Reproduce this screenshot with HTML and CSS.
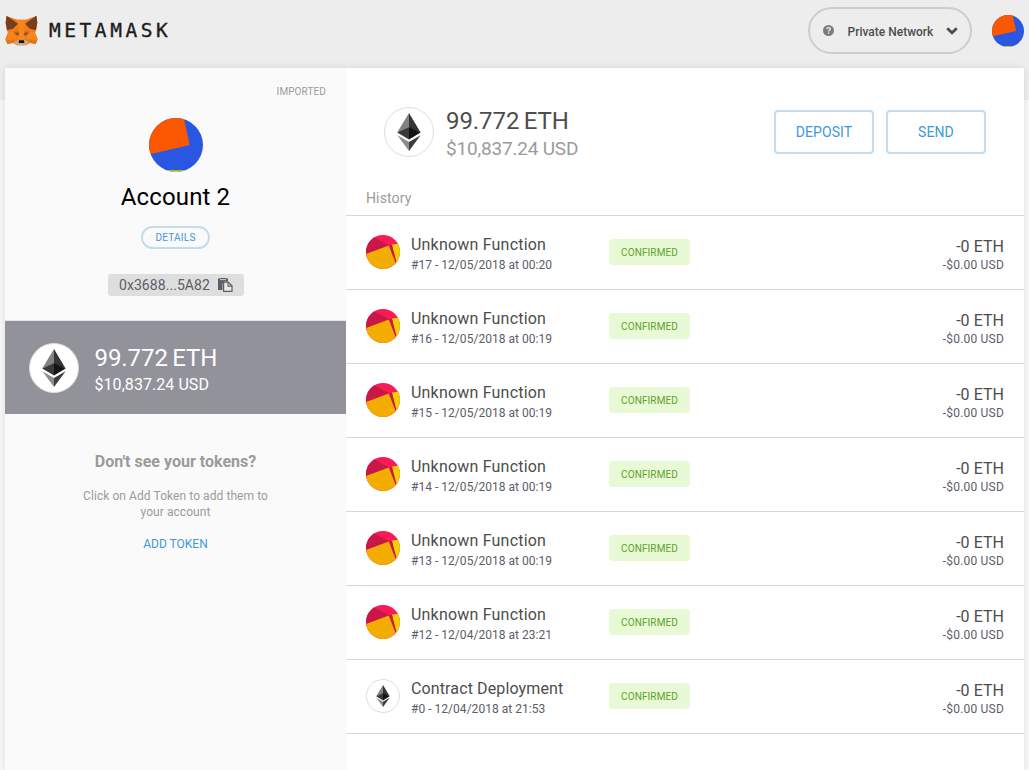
FILE: index.html
```html
<!DOCTYPE html>
<html lang="en">
<head>
<meta charset="utf-8">
<title>MetaMask</title>
<link rel="stylesheet" href="styles.css">
</head>
<body>
<svg class="sprite" aria-hidden="true">
  <symbol id="eth" viewBox="0 0 24 38">
    <path fill="#828384" d="M12 0v15.500L.2 19.600z"/>
    <path fill="#343434" d="M12 0v15.500l11.600 4.100z"/>
    <path fill="#393939" d="M12 14.300v12.300L.2 19.600z"/>
    <path fill="#141414" d="M12 14.300v12.300l11.600-7z"/>
    <path fill="#8c8c8c" d="M.4 22.200L12 29v9z"/>
    <path fill="#3c3c3b" d="M23.600 22.200L12 29v9z"/>
  </symbol>
  <symbol id="jazz-blue" viewBox="0 0 54 54">
    <clipPath id="c1"><circle cx="27" cy="27" r="27"/></clipPath>
    <g clip-path="url(#c1)">
      <path fill="#2a57e2" d="M0 0h54v54H0z"/>
      <path fill="#fa5700" d="M-4-6h37.500L40.700 27 0 36.400z"/>
      <path fill="#e6cf13" d="M10 52.200h34V54H10z"/>
    </g>
  </symbol>
  <symbol id="jazz-gold" viewBox="0 0 34 34">
    <clipPath id="c2"><circle cx="17" cy="17" r="17"/></clipPath>
    <g clip-path="url(#c2)">
      <path fill="#fb1a56" d="M0 0h34v34H0z"/>
      <path fill="#c91847" d="M0 0h4l19 10.300L29.500 30 0 22z"/>
      <path fill="#f3cf04" d="M26 9.500l8-1v20l-5-2z"/>
      <path fill="#c91847" d="M22.500 10.200l3.500-.3 4.500 17-1.500 1z"/>
      <path fill="#f3ad00" d="M0 19l22.800-8.500L30 29l-6 5H0z"/>
    </g>
  </symbol>
</svg>

<header class="topbar">
  <div class="brand">
    <svg class="fox" viewBox="0 0 99 91">
      <path fill="#ee7c1e" d="M4 2l33 11h25L95 2l2 20-4 22-3 10 8 18-6 15-18-4-11 7H36l-11-7-18 4-6-15 8-18-3-10-4-22z"/>
      <path fill="#f6851b" d="M37 13h25l-4 35 3 24H38l3-24z"/>
      <path fill="#e2761b" d="M8 54l26 9-7 18-20 5-5-16z"/>
      <path fill="#e2761b" d="M91 54l-26 9 7 18 20 5 5-16z"/>
      <path fill="#f6851b" d="M8 54l20-9 8 27-34 2z"/>
      <path fill="#f6851b" d="M91 54l-20-9-8 27 34 2z"/>
      <path fill="#763e1a" d="M5 1l34 24-15 15-18 5-4-23z"/>
      <path fill="#763e1a" d="M94 1L60 25l15 15 18 5 4-23z"/>
      <path fill="#cd6116" d="M24 48l17 1 2 12-11-1z"/>
      <path fill="#cd6116" d="M75 48l-17 1-2 12 11-1z"/>
      <path fill="#6b4b48" d="M31 53l9 1 1 5-6-1z"/>
      <path fill="#6b4b48" d="M68 53l-9 1-1 5 6-1z"/>
      <path fill="#c9a793" d="M27 81l13-7h19l13 7-12 9H38z"/>
      <path fill="#161616" d="M42 75h15l1 8H41z"/>
    </svg>
    <span class="wordmark">METAMASK</span>
  </div>
  <div class="tools">
    <div class="network">
      <svg class="help" viewBox="0 0 11 11"><circle cx="5.500" cy="5.500" r="5.500" fill="#7a7d80"/><path d="M3.800 4.100c.1-2 3.500-1.900 3.500 0 0 1.200-1.700 1.200-1.700 2.500M5.600 7.500v1.300" fill="none" stroke="#ededed" stroke-width="1.400"/></svg>
      <span class="network-name">Private Network</span>
      <svg class="chevron" viewBox="0 0 12 8"><path d="M1.200 1.200L6 5.800l4.800-4.600" fill="none" stroke="#4d4d4d" stroke-width="2.700"/></svg>
    </div>
    <svg class="user"><use href="#jazz-blue"/></svg>
  </div>
</header>

<div class="container">
  <aside class="wallet">
    <div class="imported">IMPORTED</div>
    <svg class="identicon"><use href="#jazz-blue"/></svg>
    <div class="account">Account 2</div>
    <button class="details">DETAILS</button>
    <div class="address"><span>0x3688...5A82</span>
      <svg class="copy" viewBox="0 0 15 14"><path fill="#5b5d67" d="M0 .5h2V0h6v.5h2v3H6L4.500 5.500V12H0z"/><path fill="#dedede" d="M2 1.200h6v.9H2z"/><path fill="#e8e8e8" stroke="#5b5d67" stroke-width="1.200" d="M5.600 4.200h4.600l3.800 3.600v5.600H5.600z"/><path fill="none" stroke="#5b5d67" stroke-width="1.100" d="M10 4.200v3.900h4"/></svg>
    </div>
    <div class="asset">
      <span class="coin"><svg><use href="#eth"/></svg></span>
      <div><div class="asset-eth">99.772 ETH</div><div class="asset-usd">$10,837.24 USD</div></div>
    </div>
    <div class="tokens">
      <div class="tokens-title">Don't see your tokens?</div>
      <div class="tokens-text">Click on Add Token to add them to your account</div>
      <div class="tokens-add">ADD TOKEN</div>
    </div>
  </aside>

  <main class="content">
    <section class="balance">
      <span class="coin"><svg><use href="#eth"/></svg></span>
      <div class="amounts"><div class="amount-eth">99.772 ETH</div><div class="amount-usd">$10,837.24 USD</div></div>
      <button class="action">DEPOSIT</button>
      <button class="action">SEND</button>
    </section>
    <div class="history">History</div>
    <div class="tx"><svg class="tx-icon"><use href="#jazz-gold"/></svg><div class="tx-info"><div class="tx-name">Unknown Function</div><div class="tx-date">#17 - 12/05/2018 at 00:20</div></div><span class="status">CONFIRMED</span><div class="tx-value"><div class="tx-eth">-0 ETH</div><div class="tx-usd">-$0.00 USD</div></div></div>
    <div class="tx"><svg class="tx-icon"><use href="#jazz-gold"/></svg><div class="tx-info"><div class="tx-name">Unknown Function</div><div class="tx-date">#16 - 12/05/2018 at 00:19</div></div><span class="status">CONFIRMED</span><div class="tx-value"><div class="tx-eth">-0 ETH</div><div class="tx-usd">-$0.00 USD</div></div></div>
    <div class="tx"><svg class="tx-icon"><use href="#jazz-gold"/></svg><div class="tx-info"><div class="tx-name">Unknown Function</div><div class="tx-date">#15 - 12/05/2018 at 00:19</div></div><span class="status">CONFIRMED</span><div class="tx-value"><div class="tx-eth">-0 ETH</div><div class="tx-usd">-$0.00 USD</div></div></div>
    <div class="tx"><svg class="tx-icon"><use href="#jazz-gold"/></svg><div class="tx-info"><div class="tx-name">Unknown Function</div><div class="tx-date">#14 - 12/05/2018 at 00:19</div></div><span class="status">CONFIRMED</span><div class="tx-value"><div class="tx-eth">-0 ETH</div><div class="tx-usd">-$0.00 USD</div></div></div>
    <div class="tx"><svg class="tx-icon"><use href="#jazz-gold"/></svg><div class="tx-info"><div class="tx-name">Unknown Function</div><div class="tx-date">#13 - 12/05/2018 at 00:19</div></div><span class="status">CONFIRMED</span><div class="tx-value"><div class="tx-eth">-0 ETH</div><div class="tx-usd">-$0.00 USD</div></div></div>
    <div class="tx"><svg class="tx-icon"><use href="#jazz-gold"/></svg><div class="tx-info"><div class="tx-name">Unknown Function</div><div class="tx-date">#12 - 12/04/2018 at 23:21</div></div><span class="status">CONFIRMED</span><div class="tx-value"><div class="tx-eth">-0 ETH</div><div class="tx-usd">-$0.00 USD</div></div></div>
    <div class="tx"><span class="coin coin-small"><svg><use href="#eth"/></svg></span><div class="tx-info"><div class="tx-name">Contract Deployment</div><div class="tx-date">#0 - 12/04/2018 at 21:53</div></div><span class="status">CONFIRMED</span><div class="tx-value"><div class="tx-eth">-0 ETH</div><div class="tx-usd">-$0.00 USD</div></div></div>
  </main>
</div>
</body>
</html>
```
FILE: styles.css
```css
* { box-sizing: border-box; }
body {
  margin: 0;
  height: 770px;
  overflow: hidden;
  display: flex;
  flex-direction: column;
  font-family: Roboto, "Liberation Sans", sans-serif;
  color: #4d4d4d;
  background: linear-gradient(#ededed 100px, #f7f7f7 100px);
}
svg { display: block; flex: none; }
.sprite { width: 0; height: 0; flex: 0 0 0; }
button { font-family: inherit; padding: 0; background: #fff; color: #3b99e0; }

.topbar {
  flex: 0 0 68px;
  display: flex;
  justify-content: space-between;
  padding: 7px 5px 0;
}
.brand { display: flex; align-items: flex-start; gap: 11px; padding-top: 8px; }
.fox { width: 33px; height: 31px; }
.wordmark {
  font-family: "DejaVu Sans Mono", monospace;
  font-size: 19.500px;
  line-height: 20px;
  padding-top: 6px;
  letter-spacing: 3.55px;
  color: #1c1c1c;
  -webkit-text-stroke: .35px #1c1c1c;
}
.tools { display: flex; align-items: flex-start; gap: 20px; }
.network {
  width: 164px;
  height: 47px;
  border: 2px solid #cdcdcd;
  border-radius: 24px;
  display: flex;
  align-items: center;
  padding-left: 13px;
}
.help { width: 11px; height: 11px; }
.network-name { font-size: 12px; font-weight: 500; margin: 2px 13px 0 13.500px; white-space: nowrap; }
.chevron { width: 12px; height: 8px; }
.user { width: 32px; height: 32px; margin-top: 8px; }

.container {
  flex: 1;
  display: flex;
  margin: 0 5px;
  background: #fff;
  box-shadow: 0 0 7px rgba(0, 0, 0, .1);
}
.wallet {
  flex: 0 0 341px;
  background: #fafafa;
  display: flex;
  flex-direction: column;
  align-items: center;
}
.imported {
  align-self: flex-end;
  margin: 17px 20px 0 0;
  font-size: 10px;
  line-height: 13px;
  letter-spacing: .1px;
  color: #9b9b9b;
}
.identicon { width: 54px; height: 54px; margin-top: 20px; }
.account { margin-top: 11px; font-size: 24px; line-height: 28px; letter-spacing: .12px; color: #000; }
.details {
  margin-top: 15px;
  width: 69px;
  height: 23px;
  border: 2px solid #c5dcec;
  border-radius: 12px;
  background: #fafafa;
  font-size: 10px;
  letter-spacing: .25px;
}
.address {
  margin-top: 25px;
  width: 136px;
  height: 22px;
  display: flex;
  align-items: center;
  gap: 8px;
  padding-left: 11.500px;
  border-radius: 3px;
  background: #dedede;
  color: #5b5d67;
  font-size: 14px;
  letter-spacing: .06px;
}
.copy { width: 15px; height: 14px; }
.asset {
  width: 100%;
  height: 94px;
  margin-top: 24px;
  border-top: 1px solid #e4e4e4;
  background: #92929b;
  display: flex;
  padding: 22px 0 0 24px;
  gap: 15.500px;
  color: #fff;
}
.coin {
  flex: none;
  width: 50px;
  height: 50px;
  border: 1px solid #dedede;
  border-radius: 50%;
  background: #fff;
  display: flex;
  align-items: center;
  justify-content: center;
}
.coin svg { width: 24px; height: 38px; }
.asset-eth { font-size: 24px; line-height: 28px; letter-spacing: -.08px; word-spacing: -1.500px; padding-top: 1px; }
.asset-usd { font-size: 16px; line-height: 18px; margin-top: 4px; letter-spacing: .06px; }
.tokens { width: 200px; margin-top: 38px; text-align: center; color: #9b9b9b; }
.tokens-title { font-size: 16px; line-height: 19px; font-weight: 700; }
.tokens-text { margin-top: 17px; font-size: 12px; line-height: 16px; letter-spacing: .07px; }
.tokens-add { margin-top: 16px; font-size: 12px; line-height: 16px; color: #3b99e0; }

.content { flex: 1; }
.balance { display: flex; height: 113px; padding: 39px 38px 0; }
.amounts { flex: 1; margin-left: 12px; }
.amount-eth { font-size: 24px; line-height: 28px; letter-spacing: -.08px; word-spacing: -1.500px; }
.amount-usd { font-size: 19px; line-height: 22px; margin-top: 3px; color: #9b9b9b; letter-spacing: -.2px; }
.action {
  width: 100px;
  height: 44px;
  margin: 3px 0 0 12px;
  border: 2px solid #c5dcec;
  border-radius: 4px;
  font-size: 14px;
  letter-spacing: .08px;
}
.history {
  height: 35px;
  padding: 9px 20px 0;
  border-bottom: 1px solid #d2d5dc;
  font-size: 14px;
  line-height: 17px;
  letter-spacing: .12px;
  color: #9b9b9b;
}
.tx {
  height: 74px;
  display: flex;
  padding: 19px 20px 0;
  border-bottom: 1px solid #d2d5dc;
}
.tx-icon { width: 34px; height: 34px; }
.coin-small { width: 34px; height: 34px; }
.coin-small svg { width: 14px; height: 22px; }
.tx-info { width: 198px; margin-left: 11px; }
.tx-name { font-size: 16px; line-height: 19px; letter-spacing: .2px; }
.tx:last-child .tx-name { letter-spacing: .12px; }
.tx-date { margin-top: 4px; font-size: 12px; line-height: 14px; letter-spacing: .03px; color: #5b5d67; }
.status {
  width: 81px;
  height: 26px;
  margin-top: 4px;
  border-radius: 4px;
  background: #e7f9d5;
  color: #5da22b;
  font-size: 10px;
  line-height: 27px;
  letter-spacing: .1px;
  text-align: center;
}
.tx-value { flex: 1; text-align: right; padding-top: 2px; }
.tx-eth { font-size: 16px; line-height: 19px; letter-spacing: .04px; }
.tx-usd { margin-top: 2px; font-size: 12px; line-height: 14px; letter-spacing: .2px; color: #5b5d67; }
```
